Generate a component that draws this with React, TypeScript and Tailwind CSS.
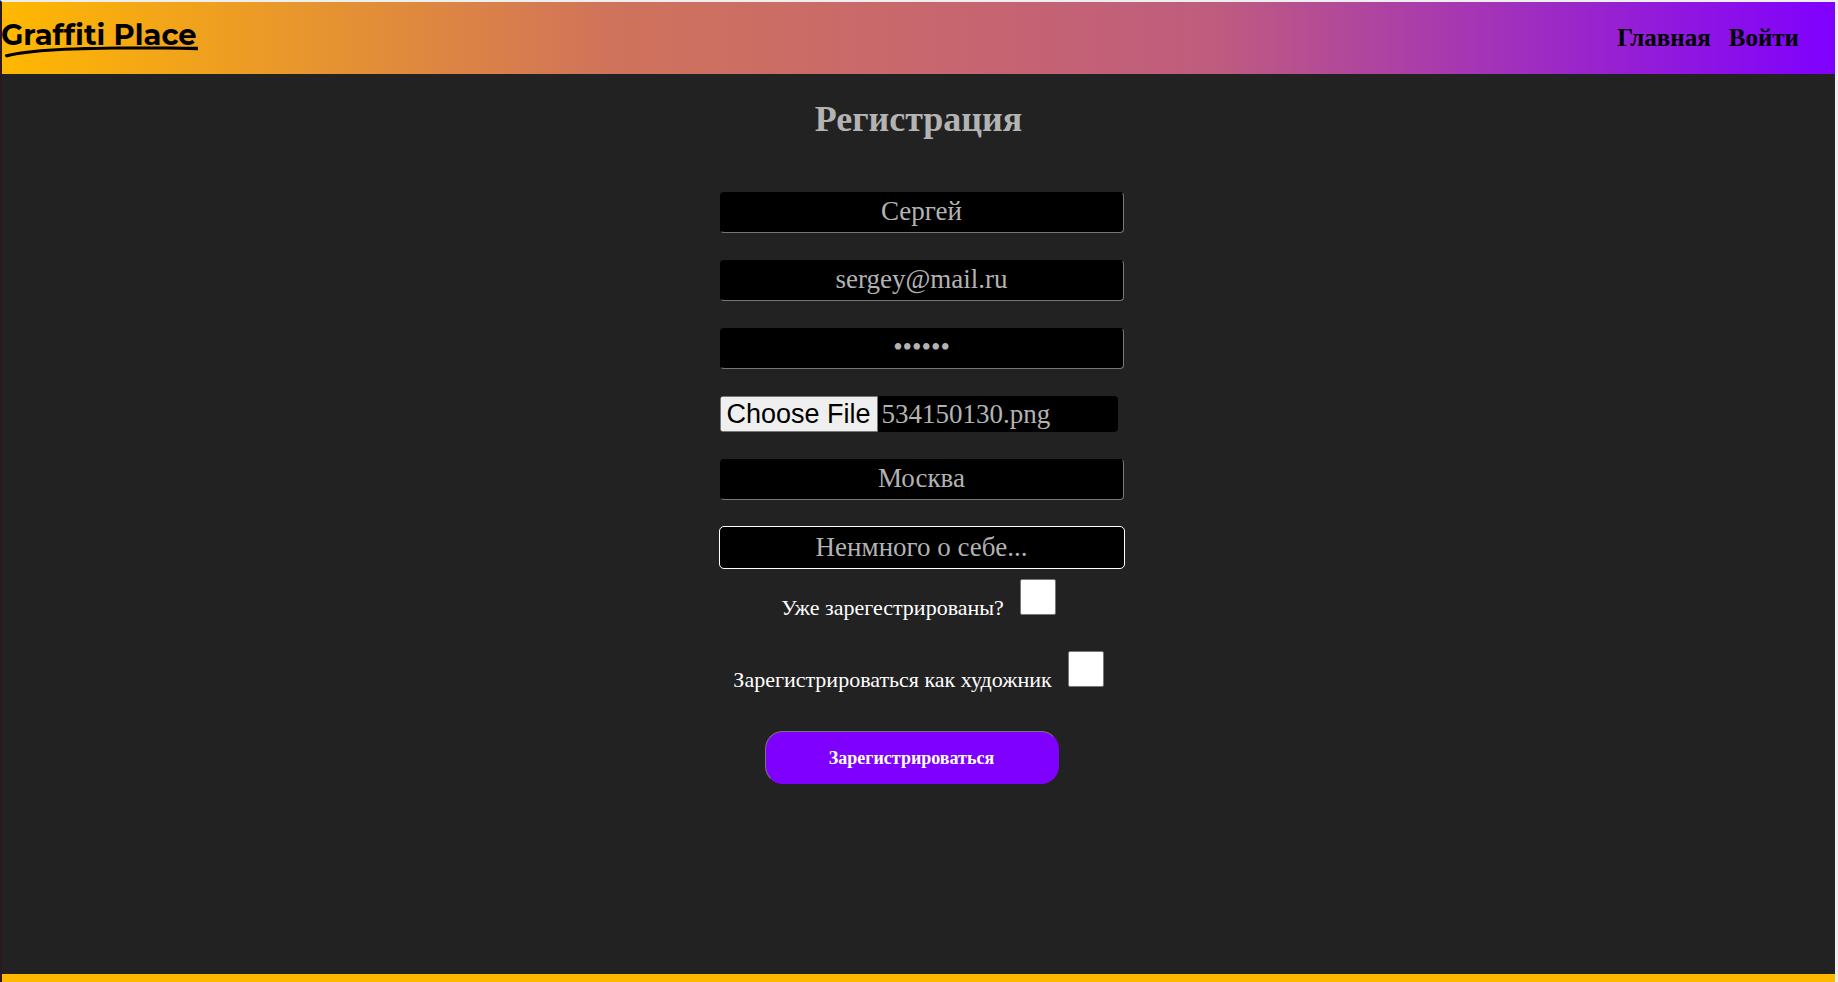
import React from "react";

const field =
  "block h-[41px] w-[404px] rounded-[4px] border border-t-black border-l-black border-r-[#767676] border-b-[#767676] bg-black px-1 pb-0.5 text-center text-[27px] leading-8 text-[#b3b3b3]";

function Logo() {
  return (
    <a href="#" className="-ml-px flex w-[197px] flex-col text-black">
      <span className="font-['Montserrat','Inter',sans-serif] text-[29px] leading-[34px] font-bold whitespace-nowrap">
        Graffiti Place
      </span>
      <svg viewBox="0 0 197 12" className="-mt-1.5 h-3 w-full" aria-hidden="true">
        <path d="M4 8.6C34 1 90 0 197 .8V4.2C100 2.6 36 4 6 11.4Q3.4 11 4 8.6Z" fill="currentColor" />
      </svg>
    </a>
  );
}

function CheckRow({ id, label }: { id: string; label: string }) {
  return (
    <div className="flex items-end gap-4">
      <label htmlFor={id} className="text-[22px] leading-[26px] text-white">
        {label}
      </label>
      <input
        id={id}
        type="checkbox"
        className="mb-1.5 size-9 appearance-none rounded-[2px] border border-[#767676] bg-white checked:bg-[#8000ff]"
      />
    </div>
  );
}

export default function App() {
  return (
    <div className="flex min-h-screen flex-col border-t-2 border-r-[3px] border-l-2 border-t-[#efefef] border-r-[#efefef] border-l-[#2b1624] bg-[#222] font-['Liberation_Serif',serif]">
      <header className="flex h-[72px] items-center justify-between bg-[linear-gradient(90deg,#ffb800_0%,#d0735b_33%,#c05c7e_66%,#8000ff_100%)] pr-9">
        <Logo />
        <nav className="flex gap-[18px] text-[25px] leading-8 font-bold text-black">
          <a href="#">Главная</a>
          <a href="#">Войти</a>
        </nav>
      </header>
      <main className="flex grow flex-col items-center">
        <h1 className="mt-6 text-[36px] leading-[42px] font-bold text-[#b3b3b3]">Регистрация</h1>
        <form className="mt-[52px] flex flex-col items-center pl-1.5" onSubmit={(e) => e.preventDefault()}>
          <div className="flex flex-col gap-[27px]">
            <input aria-label="Имя" type="text" defaultValue="Сергей" className={field} />
            <input aria-label="Почта" type="email" defaultValue="sergey@mail.ru" className={field} />
            <input aria-label="Пароль" type="password" defaultValue="secret" className={field} />
            <div className="flex h-9 w-[398px] items-center overflow-hidden rounded-[4px] bg-black">
              <label
                htmlFor="photo"
                className="h-9 rounded-l-[2px] border border-[#767676] bg-[#efefef] px-1.5 font-['Liberation_Sans',sans-serif] text-[27px] leading-[34px] text-black"
              >
                Choose File
              </label>
              <span className="pl-1 text-[27px] leading-8 text-[#b3b3b3]">534150130.png</span>
              <input id="photo" type="file" className="sr-only" />
            </div>
            <input aria-label="Город" type="text" defaultValue="Москва" className={field} />
            <input
              aria-label="О себе"
              type="text"
              defaultValue="Ненмного о себе..."
              className="block h-[41px] w-[404px] rounded-[4px] border border-black bg-black px-1 text-center text-[27px] leading-8 text-[#b3b3b3] outline-1 outline-white"
            />
          </div>
          <div className="mt-[11px] flex flex-col items-center gap-[30px] pr-1.5">
            <CheckRow id="registered" label="Уже зарегестрированы?" />
            <CheckRow id="artist" label="Зарегистрироваться как художник" />
          </div>
          <button
            type="submit"
            className="mt-[38px] mr-5 h-[53px] w-[294px] rounded-[18px] border border-t-[#767676] border-r-[#8000ff] border-b-[#8000ff] border-l-[#767676] bg-[#8000ff] text-[18px] leading-5 font-bold text-white"
          >
            Зарегистрироваться
          </button>
        </form>
      </main>
      <footer className="h-2 bg-[#ffb800]" />
    </div>
  );
}
